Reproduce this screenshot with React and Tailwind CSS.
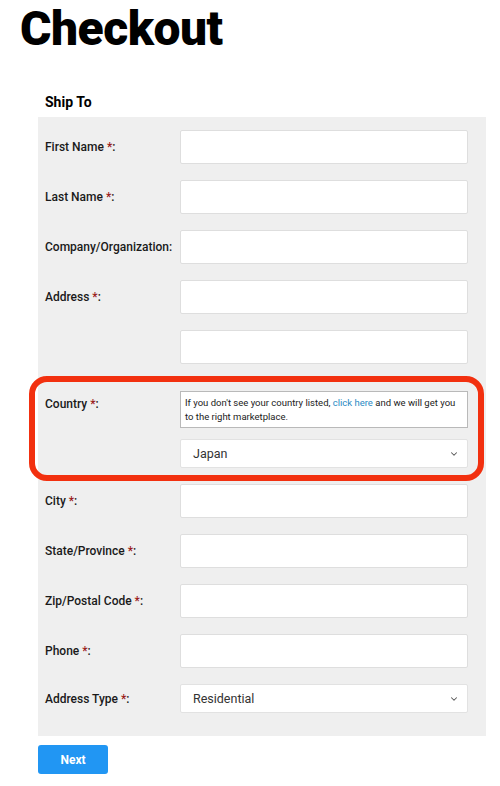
import { ChevronDown } from 'lucide-react'

const CAMPOS = [
  { label: 'First Name', req: true },
  { label: 'Last Name', req: true },
  { label: 'Company/Organization', req: false },
  { label: 'Address', req: true },
  { label: '', req: false },
]

const CAMPOS_2 = [
  { label: 'City', req: true },
  { label: 'State/Province', req: true },
  { label: 'Zip/Postal Code', req: true },
  { label: 'Phone', req: true },
]

function Rotulo({ label, req }) {
  if (!label) return <span />
  return (
    <span className="text-[12px] font-medium text-[#1a1a1a]">
      {label}
      {req && <span className="text-[#9b1c1c]"> *</span>}:
    </span>
  )
}

function Linha({ label, req }) {
  return (
    <div className="grid grid-cols-[135px_288px] items-center">
      <Rotulo label={label} req={req} />
      <input
        type="text"
        className="h-[34px] w-full rounded-[2px] border border-[#dedede] bg-white px-3 text-sm outline-none"
      />
    </div>
  )
}

function Seletor({ valor }) {
  return (
    <div className="relative h-[29px] w-full rounded-[2px] border border-[#e2e2e2] bg-white">
      <span className="absolute left-3 top-1/2 -translate-y-1/2 text-[12.5px] text-[#333]">{valor}</span>
      <ChevronDown className="absolute right-2 top-1/2 h-[10px] w-[10px] -translate-y-1/2 text-[#555]" strokeWidth={2.5} />
    </div>
  )
}

export default function App() {
  return (
    <div className="min-h-[786px] bg-white font-['Roboto',sans-serif] text-black">
      <h1 className="px-5 pt-[1px] text-[48px] font-black leading-[56px] tracking-[-0.5px]">Checkout</h1>

      <div className="ml-[38px] w-[448px] pt-[36px]">
        <h2 className="pl-[7px] text-[14px] font-bold leading-[18px]">Ship To</h2>

        <div className="relative mt-[6px] flex flex-col gap-4 bg-[#efefef] pb-[23px] pl-[7px] pt-[13px]">
          {CAMPOS.map((c, i) => (
            <Linha key={i} {...c} />
          ))}

          <div className="grid grid-cols-[135px_288px] pt-[11px]">
            <div>
              <Rotulo label="Country" req />
            </div>
            <div className="flex flex-col gap-[11px]">
              <p className="border border-[#b9b9b9] bg-white px-[4px] pb-[3px] pt-[4px] text-[9.5px] leading-[14px] text-[#222]">
                If you don't see your country listed, <a className="text-[#2a8ac4]">click here</a> and we will get you to the right marketplace.
              </p>
              <Seletor valor="Japan" />
            </div>
          </div>

          <div className="flex flex-col gap-4">
            {CAMPOS_2.map((c, i) => (
              <Linha key={i} {...c} />
            ))}
            <div className="grid grid-cols-[135px_288px] items-center">
              <Rotulo label="Address Type" req />
              <Seletor valor="Residential" />
            </div>
          </div>

          {/* destaque vermelho por cima do campo do país */}
          <div className="pointer-events-none absolute left-[-9px] top-[259px] h-[105px] w-[455px] rounded-[18px] border-[6px] border-[#f2300f]" />
        </div>

        <button
          type="button"
          className="mt-[9px] h-[29px] w-[70px] rounded-[3px] bg-[#2196f3] text-[12px] font-bold text-white"
        >
          Next
        </button>
      </div>
    </div>
  )
}
